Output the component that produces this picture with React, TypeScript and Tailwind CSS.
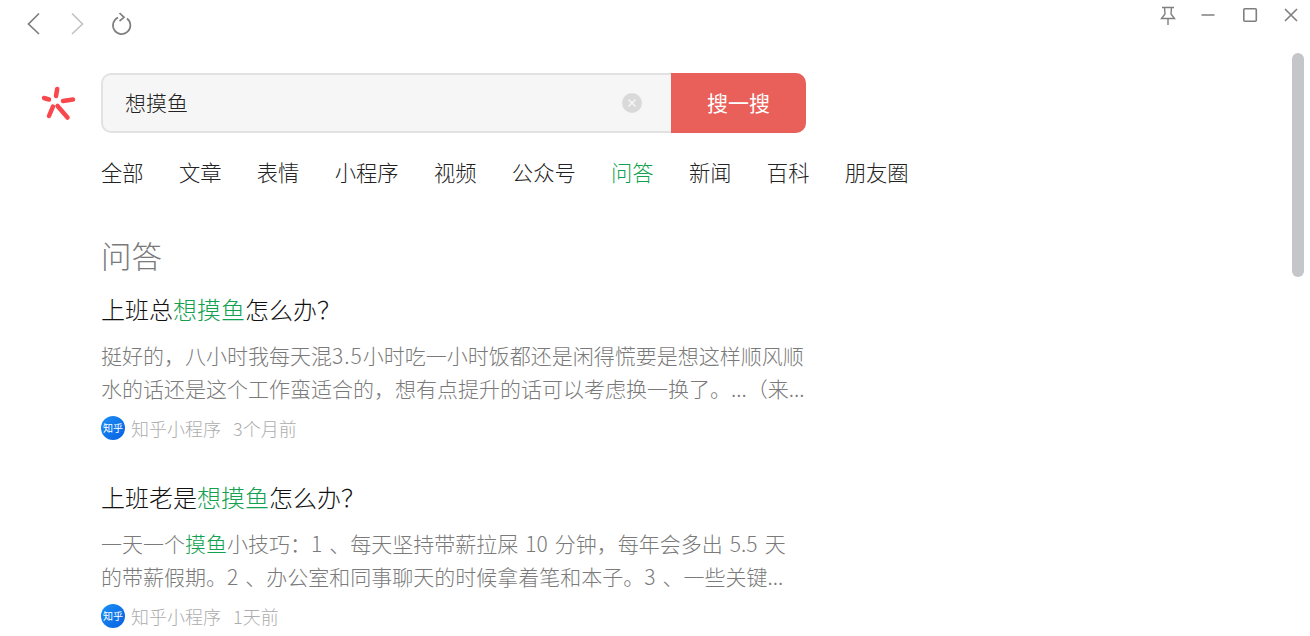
import React from "react";

const font = { fontFamily: '"Noto Sans CJK SC", "Noto Sans", sans-serif' };

const tabs = ["全部", "文章", "表情", "小程序", "视频", "公众号", "问答", "新闻", "百科", "朋友圈"];

function Zhihu() {
  return (
    <span className="w-6 h-6 rounded-full bg-gradient-to-br from-[#1e90f5] to-[#0a5fe0] text-white text-[10px] leading-6 text-center font-normal shrink-0 overflow-hidden whitespace-nowrap">
      知乎
    </span>
  );
}

function Result({ title, desc, time, mb }: { title: React.ReactNode; desc: React.ReactNode; time: string; mb: string }) {
  return (
    <div className={mb}>
      <h3 className="text-[24px] leading-[34px] text-[#111] font-light">{title}</h3>
      <p className="mt-[13px] w-[706px] text-[21px] leading-[33px] text-[#7a7a7a] font-light h-[66px] overflow-hidden [word-spacing:2.400px]">{desc}</p>
      <div className="mt-[11px] flex items-center h-6 text-[18px] text-[#adadad] font-light">
        <Zhihu />
        <span className="ml-[6px]">知乎小程序</span>
        <span className="ml-3">{time}</span>
      </div>
    </div>
  );
}

const G = ({ children }: { children: React.ReactNode }) => <span className="text-[#12a150]">{children}</span>;

export default function App() {
  return (
    <div className="relative w-[1310px] h-[636px] overflow-hidden bg-white" style={font}>
      <header className="h-[48px] flex justify-between">
        <div className="flex items-center pl-[22px]">
          <svg width="24" height="24" viewBox="0 0 24 24" fill="none" stroke="#7f7f7f" strokeWidth="1.7"><path d="M17 1.500 L6.500 12 L17 22" /></svg>
          <svg className="ml-[19px]" width="24" height="24" viewBox="0 0 24 24" fill="none" stroke="#c4c4c4" strokeWidth="1.7"><path d="M7 1.500 L17.500 12 L7 22" /></svg>
          <svg className="ml-[20px]" width="24" height="24" viewBox="0 0 24 24" fill="none" stroke="#7f7f7f" strokeWidth="1.7"><path d="M9 5.500 A8.700 8.700 0 1 0 18 6.500" /><path d="M10.500 1 L15 5.300 L10.500 9" /></svg>
        </div>
        <div className="flex items-start pt-[6px] pr-[9px] text-[#7f7f7f]">
          <svg width="20" height="20" viewBox="0 0 20 20" fill="none" stroke="#7f7f7f" strokeWidth="1.4"><path d="M4 1.500 H16 M6.500 1.500 L7 8 L3.500 12.500 H16.500 L13 8 L13.500 1.500 M10 12.500 V19" /></svg>
          <svg className="ml-[20px]" width="20" height="20" viewBox="0 0 20 20" fill="none" stroke="#7f7f7f" strokeWidth="1.5"><path d="M3.500 9 H16.500" /></svg>
          <svg className="ml-[22px]" width="20" height="20" viewBox="0 0 20 20" fill="none" stroke="#7f7f7f" strokeWidth="1.6"><rect x="3.800" y="2.800" width="12.500" height="12.500" rx="1" /></svg>
          <svg className="ml-[21px]" width="20" height="20" viewBox="0 0 20 20" fill="none" stroke="#7f7f7f" strokeWidth="1.6"><path d="M4 3 L16 15 M16 3 L4 15" /></svg>
        </div>
      </header>

      <main className="pl-[41px] pt-[25px]">
        <div className="flex items-center h-[60px]">
          <svg width="36" height="36" viewBox="0 0 36 36" className="shrink-0" fill="none" stroke="#f9484c" strokeWidth="4.500" strokeLinecap="round">
            <path d="M16.200 4 L15 11" />
            <path d="M3 13 L8 14.500" />
            <path d="M22 16 L32 14.500" />
            <path d="M12 21.500 L8 31" />
            <path d="M16.500 21 L26.500 32.500" />
          </svg>
          <div className="ml-[24px] flex w-[705px] h-[60px]">
            <div className="flex-1 flex items-center justify-between bg-[#f6f6f6] border-2 border-r-0 border-[#e2e2e2] rounded-l-[10px] pl-[22px] pr-[29px] text-[21px] text-[#222] font-light">
              <span>想摸鱼</span>
              <span className="w-5 h-5 rounded-full bg-[#d9d9d9] flex items-center justify-center">
                <svg width="10" height="10" viewBox="0 0 10 10" stroke="#f6f6f6" strokeWidth="1.5"><path d="M1.500 1.500 L8.500 8.500 M8.500 1.500 L1.500 8.500" /></svg>
              </span>
            </div>
            <button className="w-[135px] bg-[#e95f59] text-white text-[21px] rounded-r-[10px]">搜一搜</button>
          </div>
        </div>

        <nav className="ml-[60px] mt-[23px] flex gap-[35.300px] text-[21.300px] leading-[32px] text-[#222] font-light">
          {tabs.map((t) => (
            <span key={t} className={t === "问答" ? "text-[#12a150]" : ""}>{t}</span>
          ))}
        </nav>

        <section className="ml-[60px] mt-[45px] w-[720px]">
          <h2 className="text-[30.500px] leading-[44px] text-[#7a7a7a] font-light">问答</h2>
          <div className="mt-[15px]">
            <Result
              mb="mb-[40px]"
              title={<>上班总<G>想摸鱼</G>怎么办？</>}
              desc={<>挺好的，八小时我每天混<span className="tracking-[1px]">3.5</span>小时吃一小时饭都还是闲得慌要是想这样顺风顺水的话还是这个工作蛮适合的，想有点提升的话可以考虑换一换了。...（来...</>}
              time="3个月前"
            />
            <Result
              mb=""
              title={<>上班老是<G>想摸鱼</G>怎么办？</>}
              desc={<>一天一个<G>摸鱼</G>小技巧：1 、每天坚持带薪拉屎 10 分钟，每年会多出 5.5 天<br />的带薪假期。2 、办公室和同事聊天的时候拿着笔和本子。3 、一些关键...</>}
              time="1天前"
            />
          </div>
        </section>
      </main>

      <div className="absolute left-[1292px] top-[53px] w-3 h-[224px] rounded-full bg-[#c4c6ca]" />
    </div>
  );
}
